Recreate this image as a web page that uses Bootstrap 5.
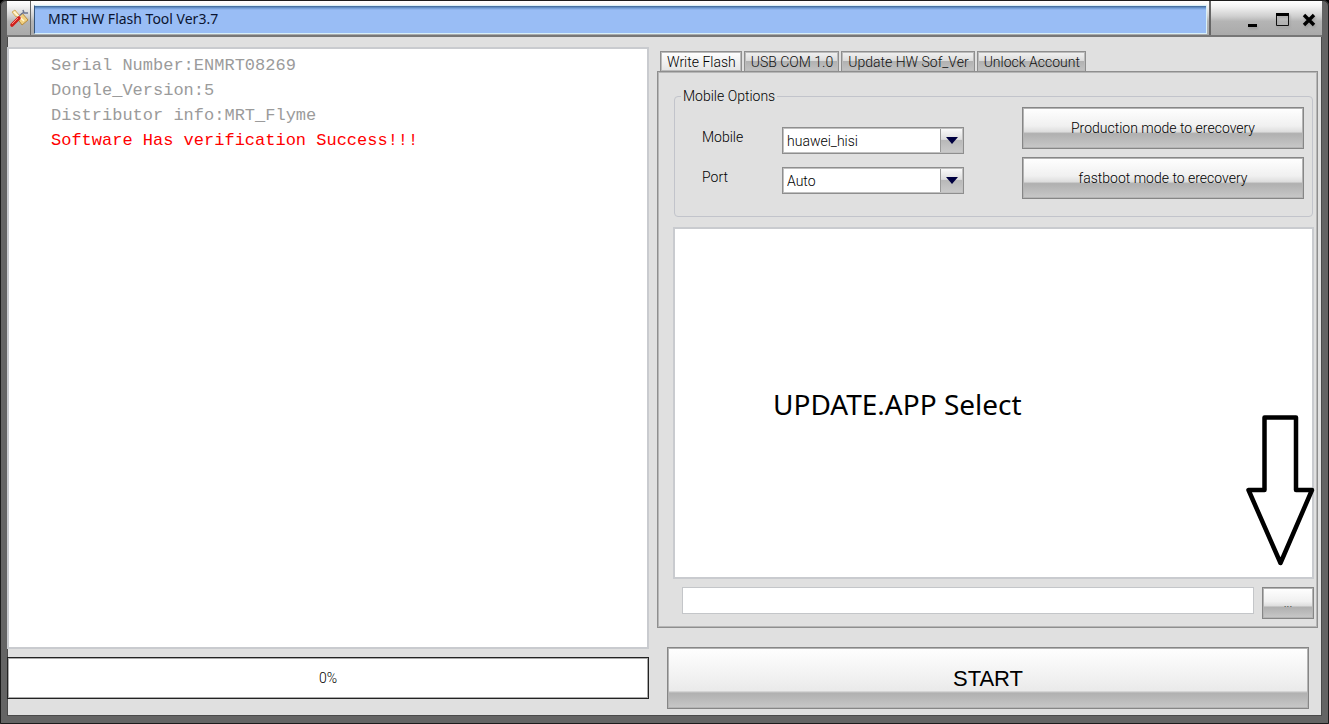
<!DOCTYPE html>
<html lang="en">
<head>
<meta charset="utf-8">
<meta name="viewport" content="width=device-width, initial-scale=1">
<title>MRT HW Flash Tool Ver3.7</title>
<link rel="stylesheet" href="https://cdn.jsdelivr.net/npm/bootstrap@5.3.0/dist/css/bootstrap.min.css">
<style>
  :root { --face: #e0e0e0; --edge: #8e8e8e; --soft: #c9cbcf; }
  body { background: #000; color: #000; font-family: Roboto, "Liberation Sans", sans-serif; font-weight: 300; font-size: 14px; line-height: 18px; }
  .app-window {
    background: var(--face);
    border: solid #646464; border-width: 1px 7px 8px;
    border-radius: 6px 6px 0 0;
    box-shadow: inset 0 0 0 1px #4a4a4a;
    outline: 1px solid #1c1c1c; outline-offset: -1px;
  }
  .title-strip { height: 36px; border-bottom: 2px solid #777; background: linear-gradient(#fff 0, #f4f4f4 15%, #cfcfcf 45%, #b4b4b4 60%, #aaa 100%); }
  .title-icon { width: 24px; border-right: 1px solid #666; }
  .title-text {
    margin: 4px 2px 1px 3px; padding-left: 13px;
    background: linear-gradient(#3c6290 0, #6d9bd4 2px, #99bdf5 4px);
    border: 1px solid #d8f0f8; border-left-color: #35557c;
    font: 14px/25px "Noto Sans", sans-serif; color: #0b1430;
  }
  .title-controls { width: 113px; border-left: 2px solid #666; padding: 3px 6px 0 0; gap: 12px; }
  .title-controls button { border: 0; background: none; padding: 0; display: flex; filter: drop-shadow(1px 2px 1px #8888); }
  .work-area { display: grid; grid-template-columns: 642fr 661fr; column-gap: 8px; padding: 10px 4px 7px 0; }
  .log-box { background: #fff; border: 2px solid var(--soft); padding: 4px 42px; font: 17px/25px "Liberation Mono", monospace; color: #9b9b9b; }
  .log-box .ok { color: #f00; }
  .flash-progress { height: 42px; background: #fff; border: 1px solid #222; box-shadow: inset 0 0 0 1px #aaa; }
  .left-col { gap: 8px; padding-bottom: 10px; }
  .page-tabs { border: 0; padding: 4px 0 0 3px; gap: 2px; }
  .page-tabs .nav-link {
    color: #111; font-weight: 300; border: 1px solid #8e8e8e; box-shadow: inset 0 0 0 1px #bbb; border-bottom: 0; border-radius: 0; margin: 0; height: 20px; padding: 1px 5px 0 6px; line-height: 18px;
    background: linear-gradient(#f2f2f2 0, #dcdcdc 45%, #b2b2b2 50%, #c2c2c2 100%);
  }
  .page-tabs .nav-link.active { color: #000; border-color: #8e8e8e; background: linear-gradient(#fff, #e4e4e4); }
  .tab-page { border: 1px solid #8e8e8e; box-shadow: inset 0 0 0 1px #b6b6b6; padding: 15px 3px 8px 15px; }
  .option-group { border: 1px solid #c2c4cb; border-radius: 4px; padding: 2px 8px 17px 27px; margin: 0 1px 10px 1px; }
  .option-group legend { font-size: 14px; line-height: 18px; margin: 0 0 0 -21px; padding: 0 2px; }
  .option-list { width: 262px; gap: 13px; padding-top: 20px; }
  .option-list label { width: 80px; padding-bottom: 8px; }
  .combo { width: 182px; height: 27px; }
  .combo select { appearance: none; width: 100%; height: 100%; border: 1px solid #8e8e8e; box-shadow: inset 0 0 0 1px #c0c0c0; border-radius: 0; background: #fff; padding: 0 26px 0 4px; font-size: 14px; font-weight: 300; line-height: 20px; color: #000; }
  .combo .drop { top: 2px; right: 2px; bottom: 2px; width: 22px; border-left: 1px solid #999; pointer-events: none; background: linear-gradient(#fafafa 0, #dedede 45%, #b9b9b9 50%, #c9c9c9 100%); }
  .glossy {
    border: 1px solid #868686; box-shadow: inset 0 0 0 1px #b4b4b4; border-radius: 0; padding: 0; color: #000; font-size: 14px; font-weight: 300; line-height: 18px;
    background: linear-gradient(#fff 0, #f0f0f0 45%, #dedede 59%, #b0b0b0 64%, #c8c8c8 100%);
  }
  .mode-list { width: 282px; gap: 8px; }
  .mode-list .glossy { height: 42px; }
  .file-pane { background: #fff; border: 2px solid var(--soft); padding: 2px 0 0 98px; font: 28px/36px "Noto Sans", sans-serif; }
  .pointer-arrow { right: -3px; bottom: 10px; }
  .file-row { padding: 8px 0 0 9px; gap: 8px; }
  .file-row input { height: 27px; border: 1px solid #c4c6c9; background: #fff; border-radius: 0; }
  .file-row button { width: 52px; height: 32px; font-size: 12px; color: #333; }
  .start-wrap { padding: 19px 9px 0 10px; }
  .start-wrap .glossy { height: 62px; padding-top: 2px; font: 22px/30px "Liberation Sans", sans-serif; background: linear-gradient(#fff 0, #f2f2f2 45%, #eaeaea 71%, #b0b0b0 75%, #c8c8c8 100%); }
</style>
</head>
<body>
<div class="app-window min-vh-100 d-flex flex-column">
  <header class="title-strip d-flex flex-shrink-0">
    <div class="title-icon d-flex align-items-center justify-content-center">
      <svg width="20" height="20" viewBox="0 0 20 20" aria-hidden="true">
        <path d="m8 10 5-5 6 7-6 5z" fill="#f0d080" stroke="#b88a3c"/>
        <path d="m3 4 3-2 4 5-3 2z" fill="#f7e2a0" stroke="#c49a45" stroke-width=".7"/>
        <path d="m10 8 5-4M14 2l1 3h4" fill="none" stroke="#6d7690" stroke-width="1.5"/>
        <path d="m5 4 10 9" stroke="#fff6d8" stroke-width="1.5"/>
        <path d="m3 17 7-7" stroke="#cf1f1c" stroke-width="3.6" stroke-linecap="round"/>
        <path d="m3 16 6-6" stroke="#ff8a7c"/>
      </svg>
    </div>
    <div class="title-text flex-grow-1">MRT HW Flash Tool Ver3.7</div>
    <div class="title-controls d-flex align-items-center justify-content-end">
      <button type="button" aria-label="Minimize"><svg width="17" height="14"><path d="M1 11h9v3H1z" fill="#000"/></svg></button>
      <button type="button" aria-label="Maximize"><svg width="14" height="14"><path d="M.5 1h12v11.500H.5z" fill="none" stroke="#111"/><path d="M0 0h13v3H0z"/></svg></button>
      <button type="button" aria-label="Close"><svg width="14" height="14"><path d="m2 2 10 10M12 2 2 12" stroke="#000" stroke-width="3.400"/></svg></button>
    </div>
  </header>

  <main class="work-area flex-grow-1">
    <section class="left-col d-flex flex-column">
      <div class="log-box flex-grow-1" role="log">
        <div>Serial Number:ENMRT08269</div>
        <div>Dongle_Version:5</div>
        <div>Distributor info:MRT_Flyme</div>
        <div class="ok">Software Has verification Success!!!</div>
      </div>
      <div class="flash-progress d-flex align-items-center justify-content-center" role="progressbar" aria-label="Flash progress" aria-valuenow="0" aria-valuemin="0" aria-valuemax="100">0%</div>
    </section>

    <section class="d-flex flex-column">
      <div class="nav nav-tabs page-tabs" role="tablist">
        <button class="nav-link active" type="button" role="tab" aria-selected="true">Write Flash</button>
        <button class="nav-link" type="button" role="tab" aria-selected="false">USB COM 1.0</button>
        <button class="nav-link" type="button" role="tab" aria-selected="false">Update HW Sof_Ver</button>
        <button class="nav-link" type="button" role="tab" aria-selected="false">Unlock Account</button>
      </div>
      <div class="tab-page flex-grow-1 d-flex flex-column" role="tabpanel">
        <fieldset class="option-group">
          <legend class="float-none w-auto">Mobile Options</legend>
          <div class="d-flex justify-content-between">
            <div class="option-list d-flex flex-column">
              <div class="d-flex align-items-center">
                <label for="mobile">Mobile</label>
                <div class="combo position-relative">
                  <select id="mobile"><option>huawei_hisi</option></select>
                  <span class="drop position-absolute d-flex align-items-center justify-content-center"><svg width="12" height="7" aria-hidden="true"><path d="M0 0h12L6 7z" fill="#000040"/></svg></span>
                </div>
              </div>
              <div class="d-flex align-items-center">
                <label for="port">Port</label>
                <div class="combo position-relative">
                  <select id="port"><option>Auto</option></select>
                  <span class="drop position-absolute d-flex align-items-center justify-content-center"><svg width="12" height="7" aria-hidden="true"><path d="M0 0h12L6 7z" fill="#000040"/></svg></span>
                </div>
              </div>
            </div>
            <div class="mode-list d-flex flex-column">
              <button type="button" class="btn glossy">Production mode to erecovery</button>
              <button type="button" class="btn glossy">fastboot mode to erecovery</button>
            </div>
          </div>
        </fieldset>
        <div class="file-pane flex-grow-1 position-relative d-flex align-items-center">
          <span>UPDATE.APP Select</span>
          <svg class="pointer-arrow position-absolute" width="69" height="152" viewBox="0 0 69 152" aria-hidden="true">
            <path d="M18.500 2.500H50V75H66L34.500 148 2.500 75H18.500z" fill="#fff" stroke="#000" stroke-width="4.500" stroke-linejoin="round"/>
          </svg>
        </div>
        <div class="file-row d-flex">
          <input type="text" class="flex-grow-1" aria-label="Firmware file">
          <button type="button" class="btn glossy">...</button>
        </div>
      </div>
      <div class="start-wrap">
        <button type="button" class="btn glossy w-100">START</button>
      </div>
    </section>
  </main>
</div>
<script src="https://cdn.jsdelivr.net/npm/bootstrap@5.3.0/dist/js/bootstrap.bundle.min.js"></script>
</body>
</html>
